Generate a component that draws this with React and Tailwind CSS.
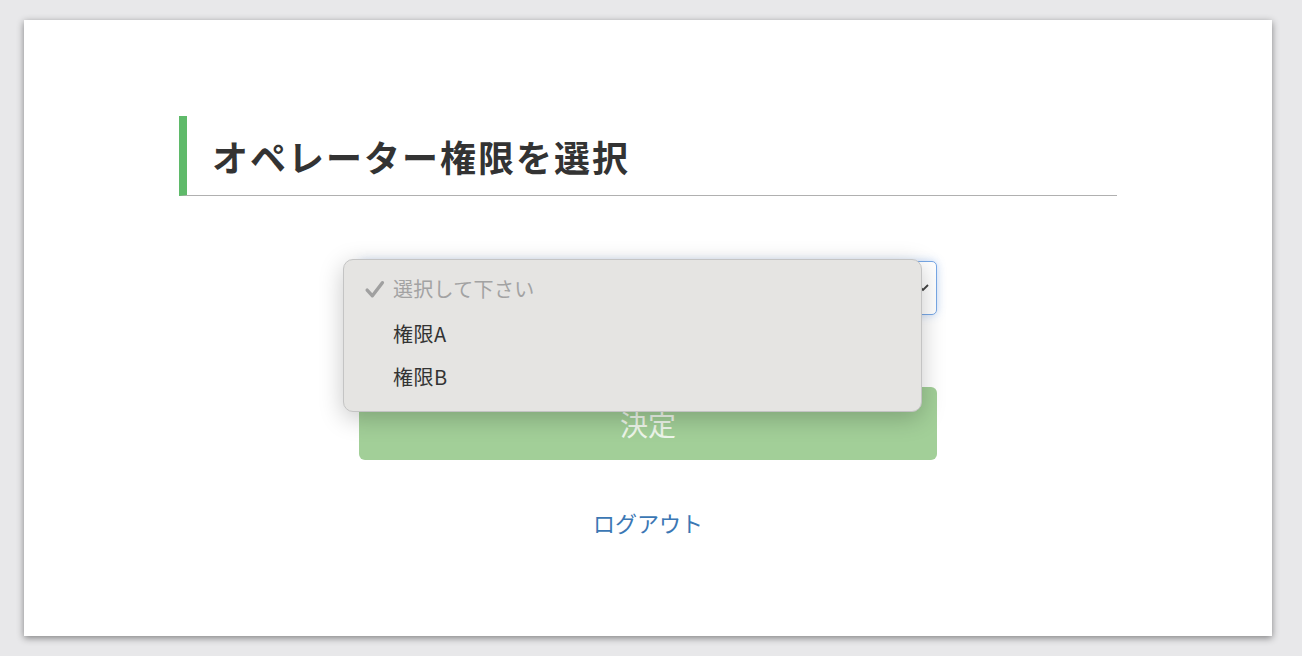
import React from "react";

export default function App() {
  return (
    <div className="w-[1302px] h-[656px] bg-[#e8e8ea] pt-[20px] pl-[24px] overflow-hidden" style={{ fontFamily: '"Noto Sans CJK JP", "Noto Sans", sans-serif' }}>
      <div className="relative w-[1248px] h-[616px] bg-white shadow-[0_2px_7px_rgba(0,0,0,0.45)] pt-[96px]">
        <div className="ml-[155px] w-[938px] h-[80px] flex items-center border-l-[8px] border-[#5fba6a] pl-[25px] border-b border-b-[#b0b0b0]">
          <h1 className="text-[36px] font-bold text-[#333333] leading-none tracking-[2px]">オペレーター権限を選択</h1>
        </div>

        <div className="mx-auto w-[578px] mt-[65px] flex flex-col items-center">
          <div className="w-[578px] h-[54px] rounded-[5px] border border-[#78a8e6] shadow-[0_0_8px_rgba(80,140,230,0.35)] bg-white flex items-center justify-end pr-[6px]">
            <svg width="14" height="10" viewBox="0 0 14 10" className="text-[#444]">
              <path d="M2 2 L7 7 L12 2" fill="none" stroke="currentColor" strokeWidth="1.8" />
            </svg>
          </div>

          <div className="mt-[72px] w-[578px] h-[73px] rounded-[6px] bg-[#a2cf98] flex items-center justify-center">
            <span className="text-[28px] text-[#eef6eb] leading-none">決定</span>
          </div>

          <div className="mt-[51px] text-[22px] text-[#3b77b4] leading-none">ログアウト</div>
        </div>

        <div className="absolute left-[319px] top-[239px] w-[579px] h-[153px] rounded-[10px] bg-[#e5e4e2] border border-[#c4c4c4] shadow-[0_6px_24px_rgba(0,0,0,0.22)] pt-[16px]">
          <div className="h-[26px] flex items-center">
            <svg width="21" height="21" viewBox="0 0 20 20" className="ml-[20px]">
              <path d="M3 10.5 L8 16 L17.5 3.5" fill="none" stroke="#a0a0a0" strokeWidth="3.2" strokeLinecap="round" strokeLinejoin="round" />
            </svg>
            <span className="ml-[8px] text-[20px] text-[#a2a2a2] leading-none tracking-[0.3px]">選択して下さい</span>
          </div>
          <div className="h-[44px] mt-[10px] flex items-center pl-[49px] text-[20px] text-[#333] leading-none tracking-[0.5px]">権限A</div>
          <div className="h-[42px] flex items-center pl-[49px] text-[20px] text-[#333] leading-none tracking-[0.5px]">権限B</div>
        </div>
      </div>
    </div>
  );
}
